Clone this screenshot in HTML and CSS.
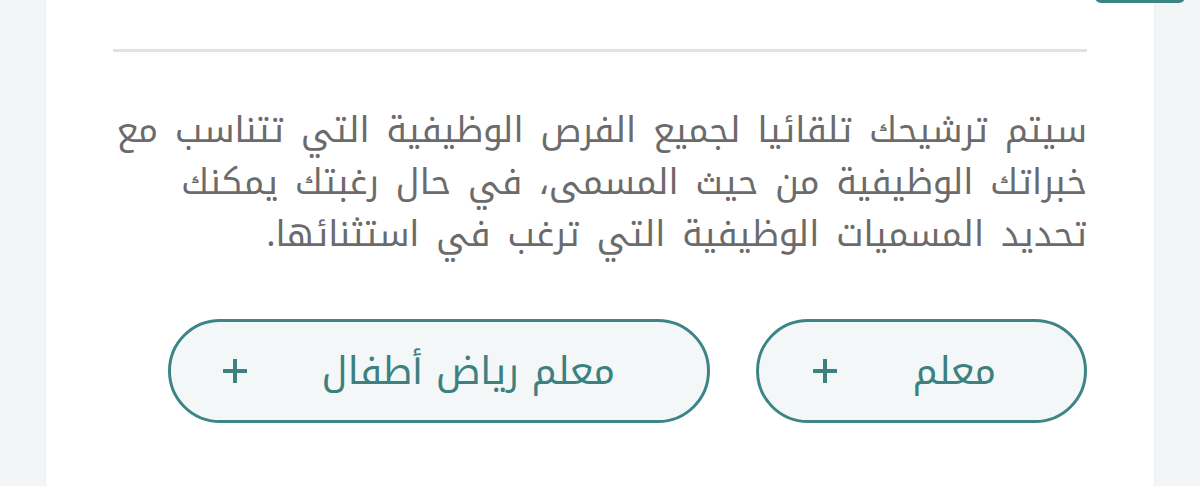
FILE: index.html
```html
<!DOCTYPE html>
<html lang="ar" dir="rtl">
<head>
<meta charset="utf-8">
<link rel="stylesheet" href="styles.css">
</head>
<body>
<div class="page">
  <div class="card">
    <div class="top-btn"></div>
    <hr class="divider">
    <p class="intro">سيتم ترشيحك تلقائيا لجميع الفرص الوظيفية التي تتناسب مع<br>خبراتك الوظيفية من حيث المسمى، في حال رغبتك يمكنك<br>تحديد المسميات الوظيفية التي ترغب في استثنائها.</p>
    <div class="chips">
      <button class="chip"><span class="chip-label">معلم</span><svg class="chip-plus" viewBox="0 0 24 24" width="24" height="24"><path d="M12 1v22M1 12h22" stroke="currentColor" stroke-width="4" stroke-linecap="round" fill="none"/></svg></button>
      <button class="chip chip-wide"><span class="chip-label">معلم رياض أطفال</span><svg class="chip-plus" viewBox="0 0 24 24" width="24" height="24"><path d="M12 1v22M1 12h22" stroke="currentColor" stroke-width="4" stroke-linecap="round" fill="none"/></svg></button>
    </div>
  </div>
</div>
</body>
</html>
```

FILE: styles.css
```css
* { box-sizing: border-box; }
html, body { margin: 0; padding: 0; }
body {
  background: #f4f5f7;
  font-family: "Noto Kufi Arabic", "Noto Sans Arabic", "DejaVu Sans", sans-serif;
  width: 1200px;
  height: 486px;
  overflow: hidden;
}
.page {
  display: flex;
  justify-content: center;
  height: 486px;
}
.card {
  position: relative;
  width: 1110px;
  height: 486px;
  background: #fff;
  border-left: 1px solid #eceef1;
  border-right: 1px solid #eceef1;
  padding: 49px 67px 0 67px;
}
.top-btn {
  position: absolute;
  top: -40px;
  right: -31px;
  width: 90px;
  height: 43px;
  border-radius: 0 0 6px 6px;
  background: #3d8585;
  z-index: 2;
}
.divider {
  border: 0;
  height: 3px;
  background: #e1e2e5;
  margin: 0;
}
.intro {
  margin: 53px 0 0 0;
  font-size: 35px;
  line-height: 52px;
  word-spacing: 5px;
  white-space: nowrap;
  color: #6b6b6b;
  text-align: right;
}
.chips {
  display: flex;
  gap: 46px;
  margin-top: 58px;
}
.chip {
  display: flex;
  align-items: center;
  justify-content: space-between;
  height: 104px;
  width: 331px;
  padding: 0 88px 0 54px;
  border: 3px solid #3d8585;
  border-radius: 52px;
  background: #f3f7f8;
  font-family: inherit;
  color: #3d8080;
  direction: rtl;
}
.chip-wide {
  width: 542px;
  padding: 0 92px 0 52px;
}
.chip-label { font-size: 38px; }
.chip-plus { flex: none; color: #3d8080; }
```
